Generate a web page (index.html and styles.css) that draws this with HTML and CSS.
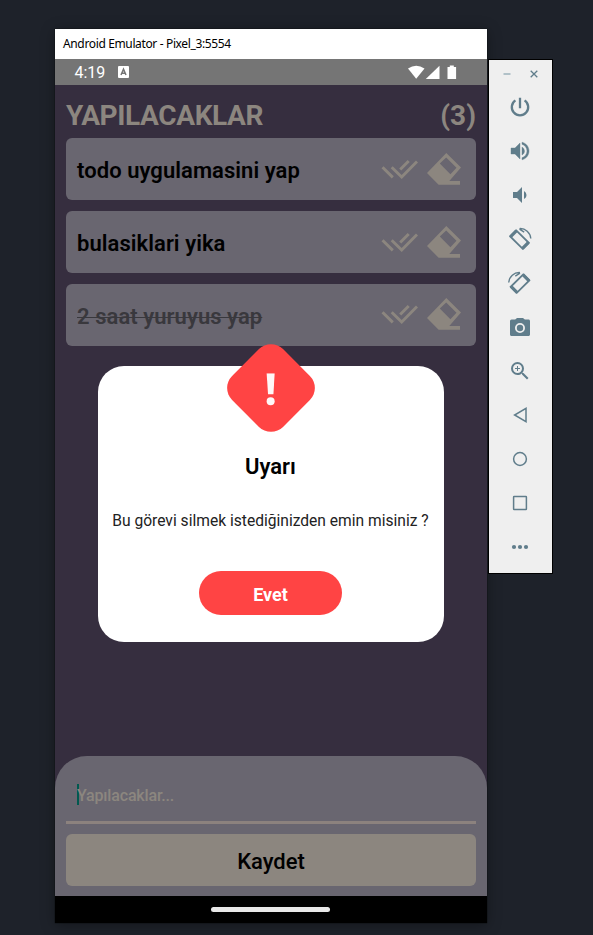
FILE: index.html
```html
<!DOCTYPE html>
<html lang="tr">
<head>
<meta charset="utf-8">
<title>Android Emulator</title>
<link rel="stylesheet" href="styles.css">
</head>
<body>
<svg class="defs" width="0" height="0">
  <symbol id="done" viewBox="0 0 37 20"><g fill="none" stroke="currentColor" stroke-width="2.9"><path d="M1.5 8.3 11.8 18.4M10.7 8.3 20.7 18 36 2.5M19.2 10.5 27.7 2"/></g></symbol>
  <symbol id="eraser" viewBox="0 0 34 32"><path fill="currentColor" fill-rule="evenodd" d="M19.3 0 34 14.6 22.3 28.1H33v3.6H11.6L0 20.1ZM19.2 4.4 12.8 10.5 23.4 21.3 29.5 14.7Z"/></symbol>
</svg>
<div class="desktop">
  <main class="emulator">
    <header class="titlebar"><span>Android Emulator - Pixel_3:5554</span></header>
    <div class="status">
      <span class="clock">4:19</span>
      <svg class="badge" width="11" height="12" viewBox="0 0 11 12"><rect width="11" height="12" rx="1" fill="#fff"/><path d="M3 9 5.5 3.2 8 9M3.8 7.3h3.4" fill="none" stroke="#757575" stroke-width="1.5"/></svg>
      <svg class="signals" width="50" height="15" viewBox="0 0 50 15"><g fill="#fff"><path d="M0 3.5Q8.2-2.2 16.5 3.5L8.2 13.7Z"/><path d="M17.8 14 31.5.7V14Z"/><path d="M39.5 2h2.3V.5h4V2h2.3v12h-8.6Z"/></g></svg>
    </div>
    <section class="app">
      <div class="heading"><h1>YAPILACAKLAR</h1><span>(3)</span></div>
      <ul class="todos">
        <li><span class="task">todo uygulamasini yap</span><svg class="done"><use href="#done"/></svg><svg class="eraser"><use href="#eraser"/></svg></li>
        <li><span class="task">bulasiklari yika</span><svg class="done"><use href="#done"/></svg><svg class="eraser"><use href="#eraser"/></svg></li>
        <li><span class="task completed">2 saat yuruyus yap</span><svg class="done"><use href="#done"/></svg><svg class="eraser"><use href="#eraser"/></svg></li>
      </ul>
      <form class="composer">
        <div class="field"><i class="caret"></i><span>Yapılacaklar...</span></div>
        <button type="button" class="save">Kaydet</button>
      </form>
      <div class="dialog" role="dialog">
        <div class="warning"><svg width="10" height="33" viewBox="0 0 10 33"><path fill="#fff7f7" d="M1 0h8L7.8 21H2.4Z"/><circle cx="5" cy="28" r="4" fill="#fff7f7"/></svg></div>
        <h2>Uyarı</h2>
        <p>Bu görevi silmek istediğinizden emin misiniz ?</p>
        <button type="button" class="confirm">Evet</button>
      </div>
    </section>
    <div class="nav"><i></i></div>
  </main>
  <aside class="tools">
    <div class="window-buttons">
      <svg width="8" height="8" viewBox="0 0 8 8"><path d="M.5 4h7" stroke="#9db2bb" stroke-width="1.5"/></svg>
      <svg width="8" height="8" viewBox="0 0 8 8"><path d="m.7.7 6.6 6.6m0-6.6L.7 7.3" stroke="#607d8b" stroke-width="1.3"/></svg>
    </div>
    <svg viewBox="0 0 24 24"><path d="M12 2.7v10.6M7.4 5.4a8.2 8.2 0 1 0 9.2 0" fill="none" stroke="#607d8b" stroke-width="2.3"/></svg>
    <svg viewBox="0 0 24 24"><path fill="#607d8b" stroke="#607d8b" stroke-width=".4" d="M3 9v6h4l5 5V4L7 9H3zm13.5 3A4.5 4.5 0 0 0 14 7.97v8.05c1.48-.73 2.5-2.25 2.5-4.02zM14 3.23v2.06c2.89.86 5 3.54 5 6.71s-2.11 5.85-5 6.71v2.06c4.01-.91 7-4.49 7-8.77s-2.99-7.86-7-8.77z"/></svg>
    <svg viewBox="0 0 24 24"><path fill="#607d8b" d="M18.5 12A4.5 4.5 0 0 0 16 7.97v8.05c1.48-.73 2.5-2.25 2.5-4.02zM5 9v6h4l5 5V4L9 9H5z"/></svg>
    <svg viewBox="0 0 24 24"><g fill="none" stroke="#607d8b"><path d="M8.2 3.4 20.8 15.8 14.7 21.8 2.2 9.4Z" stroke-width="1.8"/><path d="M8.6 3.6 2.4 9.8M20.5 15.4 14.3 21.6" stroke-width="3.2"/><path d="M11.5 1.6A10.6 10.6 0 0 1 22.8 11.5M11.5 2.1l4.7 3" stroke-width="1.4"/></g></svg>
    <svg viewBox="0 0 24 24"><g transform="matrix(-1 0 0 1 23.5 0)" fill="none" stroke="#607d8b"><path d="M8.2 3.4 20.8 15.8 14.7 21.8 2.2 9.4Z" stroke-width="1.8"/><path d="M8.6 3.6 2.4 9.8M20.5 15.4 14.3 21.6" stroke-width="3.2"/><path d="M11.5 1.6A10.6 10.6 0 0 1 22.8 11.5M11.5 2.1l4.7 3" stroke-width="1.4"/></g></svg>
    <svg viewBox="0 0 24 24"><path fill="#607d8b" fill-rule="evenodd" d="M9 3 7.17 4.6H3.5A1.5 1.5 0 0 0 2 6.1v13.4c0 .8.7 1.5 1.5 1.5h17c.8 0 1.5-.7 1.5-1.5V6.1c0-.8-.7-1.5-1.5-1.5h-3.67L15 3H9zm3 15a5 5 0 1 1 0-10 5 5 0 0 1 0 10z"/><circle cx="12" cy="13" r="3.2" fill="#607d8b"/></svg>
    <svg viewBox="0 0 24 24"><path fill="#607d8b" d="M15.5 14h-.79l-.28-.27A6.47 6.47 0 0 0 16 9.5 6.5 6.5 0 1 0 9.5 16c1.61 0 3.09-.59 4.23-1.57l.27.28v.79l5 4.99L20.49 19l-4.99-5zm-6 0a4.5 4.5 0 1 1 0-9 4.5 4.5 0 0 1 0 9zm2.5-4h-2v2H9v-2H7V9h2V7h1v2h2v1z"/></svg>
    <svg viewBox="0 0 24 24"><path d="M18 5.3v13.4L6.6 12Z" fill="none" stroke="#607d8b" stroke-width="1.5"/></svg>
    <svg viewBox="0 0 24 24"><circle cx="12" cy="12" r="6.4" fill="none" stroke="#607d8b" stroke-width="1.5"/></svg>
    <svg viewBox="0 0 24 24"><rect x="5.6" y="5.6" width="12.8" height="12.8" rx=".5" fill="none" stroke="#607d8b" stroke-width="1.5"/></svg>
    <svg viewBox="0 0 24 24"><g fill="#607d8b"><circle cx="6" cy="12" r="2.1"/><circle cx="12" cy="12" r="2.1"/><circle cx="18" cy="12" r="2.1"/></g></svg>
  </aside>
</div>
</body>
</html>
```
FILE: styles.css
```css
* { box-sizing: border-box; }
body { margin: 0; background: #1e222a; font-family: Roboto, sans-serif; overflow: hidden; }
h1, h2, p, ul { margin: 0; padding: 0; }
button { border: 0; padding: 0; font-family: inherit; }
svg { display: block; flex: none; }
.defs { position: absolute; }
.desktop { display: flex; align-items: flex-start; height: 935px; padding: 29px 0 0 55px; }
.emulator { width: 432px; height: 894px; box-shadow: 0 2px 13px rgba(0,0,0,.35), 0 0 1px #000; display: flex; flex-direction: column; }
.titlebar { height: 30px; background: #fff; color: #000; padding-left: 8px; font: 12px/30px "Noto Sans", "Open Sans", sans-serif; white-space: nowrap; letter-spacing: -.36px; }
.status { height: 26px; background: #757575; display: flex; align-items: center; padding: 0 29.5px 0 19.5px; }
.clock { color: #fff; font-size: 16px; line-height: 26px; padding-top: 1px; width: 43px; }
.signals { margin-left: auto; }
.app { position: relative; height: 811px; background: #362e3f; display: flex; flex-direction: column; padding-top: 13px; }
.heading { display: flex; justify-content: space-between; padding: 0 11px; height: 40.4px; color: #8c867f; font-weight: 700; font-size: 28px; line-height: 36px; }
.heading h1 { font: inherit; letter-spacing: -.38px; }
.todos { list-style: none; padding: 0 11px; display: grid; gap: 10.8px; }
.todos li { height: 62px; border-radius: 6px; background: #696670; display: flex; align-items: center; padding: 0 15.5px 0 11px; }
.task { flex: 1; font-size: 22px; font-weight: 600; letter-spacing: .06px; color: #000; line-height: 30px; padding-top: 4px; }
.completed { color: #39383d; text-decoration: line-through; text-decoration-thickness: 1px; }
.done { width: 37px; height: 20px; color: #8c867f; margin: -1px 8.5px 0 0; }
.eraser { width: 34px; height: 32px; color: #8c867f; margin-top: -1px; }
.composer { margin-top: auto; height: 140px; background: #696670; border-radius: 32px 32px 0 0; padding: 11px 11px 0; }
.field { height: 57px; border-bottom: 3px solid #8c827e; display: flex; align-items: center; padding-left: 10.5px; color: #8c867f; font-size: 16px; font-weight: 500; letter-spacing: -.17px; }
.field span { padding-top: 2px; }
.caret { width: 2.5px; height: 21px; background: #00594f; margin-right: -2px; }
.save { display: block; width: 100%; height: 52px; margin-top: 10px; padding-top: 2px; background: #8c867f; border-radius: 6px; color: #000; font-size: 22px; font-weight: 500; }
.dialog { position: absolute; left: 42.5px; top: 281px; width: 346px; height: 275.5px; border-radius: 26px; background: #fff; display: flex; flex-direction: column; align-items: center; color: #000; }
.warning { width: 72px; height: 72px; border-radius: 17px; background: #ff4444; margin-top: -14px; flex: none; display: grid; place-items: center; transform: rotate(45deg); }
.warning svg { transform: rotate(-45deg) translateY(1.5px); }
.dialog h2 { margin-top: 28px; font-size: 22px; line-height: 30px; font-weight: 600; }
.dialog p { margin-top: 29px; font-size: 15.6px; line-height: 20px; white-space: nowrap; color: #222; }
.confirm { margin-top: 40px; padding-top: 2px; width: 143px; height: 44px; border-radius: 22px; background: #ff4444; color: #fff; font-size: 18px; font-weight: 700; }
.nav { height: 27px; background: #000; display: grid; place-items: center; }
.nav i { width: 119px; height: 5px; border-radius: 2.5px; background: #e8e8e8; margin-right: 1px; }
.tools { width: 65px; height: 515px; margin: 30px 0 0 1px; background: #efefef; border: 1px solid #000; display: flex; flex-direction: column; align-items: center; gap: 20px; }
.tools > svg { width: 24px; height: 24px; margin-right: 2px; }
.window-buttons { height: 14px; display: flex; align-items: flex-end; gap: 19px; margin: 4px 0 -3px; }
```
